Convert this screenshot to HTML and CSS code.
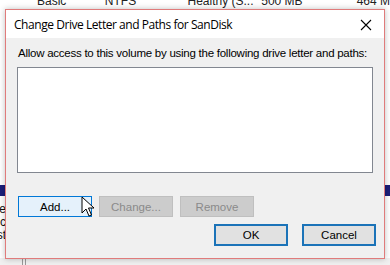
FILE: index.html
```html
<!DOCTYPE html>
<html lang="en">
<head>
    <meta charset="UTF-8">
    <meta name="viewport" content="width=device-width, initial-scale=1.0">
    <title>Change Drive Letter and Paths</title>
    <link rel="stylesheet" href="styles.css">
</head>
<body>
    <!-- Disk Management window behind the dialog -->
    <div class="desktop">
        <div class="volume-row">
            <span class="col-layout">Basic</span>
            <span class="col-fs">NTFS</span>
            <span class="col-status">Healthy (S...</span>
            <span class="col-cap">500 MB</span>
            <span class="col-free">464 M</span>
        </div>
        <div class="back-body">
            <div class="side left-side">
                <div class="disk-bar"></div>
                <div class="side-text">
                    <div>se</div>
                    <div>c</div>
                    <div>st</div>
                </div>
            </div>
            <div class="side right-side">
                <div class="disk-bar"></div>
            </div>
        </div>
        <div class="back-bottom">
            <span class="split"></span>
        </div>
    </div>

    <!-- Dialog -->
    <div class="dialog">
        <div class="title-bar">
            <span class="title">Change Drive Letter and Paths for SanDisk</span>
            <svg class="close" width="12" height="12" viewBox="0 0 12 12">
                <path d="M1 1 L11 11 M11 1 L1 11" stroke="#000" stroke-width="1.1" fill="none"/>
            </svg>
        </div>
        <div class="content">
            <p class="prompt">Allow access to this volume by using the following drive letter and paths:</p>
            <div class="path-list"></div>
            <div class="path-actions">
                <button class="btn btn-hot">Add...</button>
                <button class="btn" disabled>Change...</button>
                <button class="btn" disabled>Remove</button>
            </div>
            <div class="dialog-actions">
                <button class="btn btn-default">OK</button>
                <button class="btn btn-default">Cancel</button>
            </div>
        </div>
    </div>

    <!-- mouse pointer -->
    <svg class="pointer" width="14" height="22" viewBox="0 0 14 22">
        <path d="M1 1 L1 17 L5 13 L8 20 L10.5 19 L7.5 12 L13 12 Z" fill="#fff" stroke="#000" stroke-width="1" stroke-linejoin="miter"/>
    </svg>
</body>
</html>
```

FILE: styles.css
```css
body {
    margin: 0;
    width: 390px;
    height: 265px;
    overflow: hidden;
    font-family: "Liberation Sans", Arial, sans-serif;
    background-color: #f0f0f0;
    position: relative;
}

/* window behind */
.desktop {
    height: 265px;
    display: flex;
    flex-direction: column;
    background-color: #f0f0f0;
}

.volume-row {
    height: 9px;
    background-color: #fff;
    font-size: 12px;
    line-height: 12px;
    color: #222;
    overflow: hidden;
    display: flex;
}

.volume-row span {
    margin-top: -5px;
    white-space: nowrap;
}

.col-layout { margin-left: 37px; width: 69px; }
.col-fs { width: 84px; }
.col-status { width: 75px; }
.col-cap { width: 97px; }

.back-body {
    flex: 1;
    display: flex;
    justify-content: space-between;
}

.side {
    width: 6px;
    background-color: #fff;
    padding-top: 176px;
    overflow: hidden;
}

.disk-bar {
    height: 11px;
    background-color: #1b1f7a;
}

.side-text {
    font-size: 12px;
    line-height: 13px;
    margin-top: 7px;
    color: #111;
    display: flex;
    flex-direction: column;
    align-items: flex-end;
}

.back-bottom {
    height: 7px;
}

.split {
    display: block;
    margin-left: 22px;
    width: 2px;
    height: 7px;
    border-left: 1px solid #999;
    border-right: 1px solid #999;
}

/* dialog */
.dialog {
    position: absolute;
    left: 5px;
    top: 9px;
    width: 378px;
    height: 248px;
    border: 1px solid #e07b7b;
    background-color: #f0f0f0;
    box-shadow: 0 0 6px rgba(0, 0, 0, 0.25);
    display: flex;
    flex-direction: column;
}

.title-bar {
    height: 28px;
    flex-shrink: 0;
    background-color: #fff;
    display: flex;
    align-items: center;
    justify-content: space-between;
    padding: 0 12px 0 8px;
}

.title {
    font-family: "Open Sans", "Noto Sans", sans-serif;
    font-size: 12px;
    color: #000;
    letter-spacing: -0.45px;
    margin-top: 1px;
}

.close {
    margin-top: 1px;
}

.content {
    padding: 0 4px 0 11px;
    display: flex;
    flex-direction: column;
}

.prompt {
    margin: 8px 0 0 1px;
    font-size: 11.5px;
    line-height: 14px;
    letter-spacing: -0.25px;
    white-space: nowrap;
    color: #000;
}

.path-list {
    margin-top: 7px;
    margin-right: 7px;
    height: 104px;
    background-color: #fff;
    border: 1px solid #828790;
}

.path-actions {
    margin-top: 23px;
    display: flex;
    gap: 7px;
    padding-left: 1px;
}

.btn {
    width: 74px;
    height: 21px;
    padding: 0;
    font-family: "Liberation Sans", Arial, sans-serif;
    font-size: 11.5px;
    color: #000;
    background-color: #e1e1e1;
    border: 1px solid #adadad;
    border-radius: 0;
}

.btn:disabled {
    color: #8a8a8a;
    background-color: #cccccc;
    border-color: #bfbfbf;
}

.btn-hot {
    background-color: #e5f1fb;
    border-color: #0078d7;
}

.dialog-actions {
    margin-top: 7px;
    display: flex;
    justify-content: flex-end;
    gap: 14px;
    padding-right: 4px;
}

.btn-default {
    height: 22px;
    border: 2px solid #1b73b8;
}

.pointer {
    position: absolute;
    left: 81px;
    top: 196px;
}
```
